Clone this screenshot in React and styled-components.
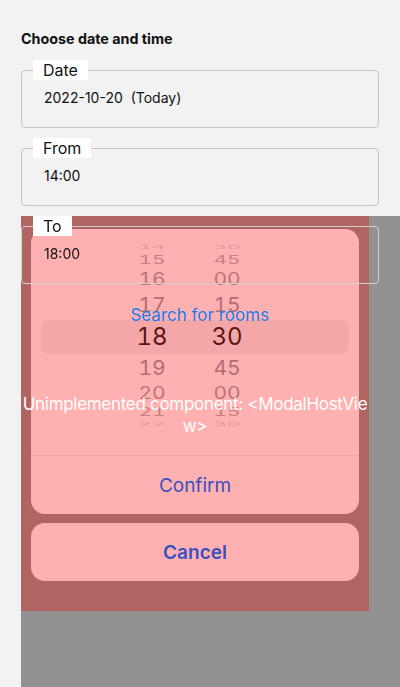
import React from "react";
import styled, { createGlobalStyle } from "styled-components";

const Global = createGlobalStyle`
  html, body { margin: 0; padding: 0; }
  body {
    background: #f2f2f2;
    font-family: "Inter", "Liberation Sans", sans-serif;
    width: 400px;
    height: 687px;
    overflow: hidden;
  }
`;

const Page = styled.div`
  padding: 30px 21px 0;
  display: flex;
  flex-direction: column;
`;

const Title = styled.h1`
  margin: 0 0 12px;
  font-size: 14.3px;
  line-height: 18px;
  font-weight: 700;
  color: #111;
`;

const FieldSet = styled.fieldset`
  margin: 0 0 10px;
  padding: 0 22px 19px;
  border: 1.5px solid #c6c6c6;
  border-radius: 4px;
  background: transparent;
  position: relative;
  z-index: ${(p) => (p.$raised ? 3 : 0)};
  border-color: ${(p) => (p.$raised ? "#d0d0d0" : "#c6c6c6")};
`;

const Legend = styled.legend`
  margin-left: -11px;
  padding: 0 10px;
  background: #ffffff;
  font-size: 16px;
  line-height: 20px;
  color: #111;
`;

const Value = styled.div`
  margin-top: 8px;
  font-size: 14px;
  line-height: 20px;
  color: #111;
  white-space: pre;
`;

const SearchButton = styled.div`
  margin-top: 10px;
  text-align: center;
  font-size: 17px;
  line-height: 22px;
  color: #1a7cf5;
  position: relative;
  z-index: 3;
`;

const Backdrop = styled.div`
  position: fixed;
  top: 216px;
  left: 21px;
  right: 0;
  bottom: 0;
  background: #929292;
  z-index: 1;
`;

const RedPanel = styled.div`
  position: relative;
  width: 348px;
  height: 395px;
  box-sizing: border-box;
  background: #b06562;
  padding: 13px 10px 30px;
  display: flex;
  flex-direction: column;
  gap: 9px;
`;

const Card = styled.div`
  background: #ffb1b1;
  border-radius: 14px;
  overflow: hidden;
  display: flex;
  flex-direction: column;
`;

const PickerArea = styled.div`
  position: relative;
  height: 227px;
  border-bottom: 1px solid #f3a2a2;
  box-sizing: border-box;
  padding-top: 12px;
  padding-left: 91px;
  display: flex;
  gap: 15px;
  overflow: hidden;
`;

const Band = styled.div`
  position: absolute;
  top: 91px;
  left: 10px;
  right: 10px;
  height: 34px;
  border-radius: 8px;
  background: #f5a7a7;
`;

const Wheel = styled.div`
  position: relative;
  width: 60px;
  display: flex;
  flex-direction: column;
`;

const Slot = styled.div`
  display: flex;
  align-items: center;
  justify-content: center;
  overflow: visible;
`;

const Digit = styled.span`
  display: inline-block;
  font-size: ${(p) => (p.$sel ? 24 : 21)}px;
  line-height: 24px;
  color: ${(p) => (p.$sel ? "#5a1717" : "#b06a6a")};
  font-variant-numeric: tabular-nums;
`;

const ActionButton = styled.div`
  height: 58px;
  display: flex;
  align-items: center;
  justify-content: center;
  font-size: 19px;
  color: #3950c1;
  font-weight: ${(p) => (p.$bold ? 600 : 400)};
`;

const ErrorText = styled.div`
  position: absolute;
  left: 0;
  right: 0;
  top: 177px;
  text-align: center;
  font-size: 17px;
  line-height: 22px;
  letter-spacing: -0.3px;
  color: #ffffff;
  word-break: break-all;
  padding: 0 1px;
`;

const slots = [
  { h: 11, s: 0.22, o: 0.35 },
  { h: 15.5, s: 0.55, o: 0.7 },
  { h: 22.5, s: 0.8, o: 0.85 },
  { h: 30, s: 0.95, o: 0.95 },
  { h: 33.5, s: 1, o: 1, sel: true },
  { h: 28.5, s: 0.95, o: 0.95 },
  { h: 22, s: 0.8, o: 0.85 },
  { h: 15, s: 0.55, o: 0.7 },
  { h: 10.5, s: 0.22, o: 0.35 },
];

const hours = ["14", "15", "16", "17", "18", "19", "20", "21", "22"];
const minutes = ["30", "45", "00", "15", "30", "45", "00", "15", "30"];

function WheelColumn({ values }) {
  return (
    <Wheel>
      {values.map((v, i) => {
        const sl = slots[i];
        return (
          <Slot key={i} style={{ height: sl.h }}>
            <Digit
              $sel={sl.sel}
              style={{ transform: `scaleY(${sl.s})`, opacity: sl.o }}
            >
              {v}
            </Digit>
          </Slot>
        );
      })}
    </Wheel>
  );
}

function Field({ label, value, raised }) {
  return (
    <FieldSet $raised={raised}>
      <Legend>{label}</Legend>
      <Value>{value}</Value>
    </FieldSet>
  );
}

export default function App() {
  return (
    <>
      <Global />
      <Page>
        <Title>Choose date and time</Title>
        <Field label="Date" value="2022-10-20  (Today)" />
        <Field label="From" value="14:00" />
        <Field label="To" value="18:00" raised />
        <SearchButton>Search for rooms</SearchButton>
      </Page>
      <Backdrop>
        <RedPanel>
          <Card>
            <PickerArea>
              <Band />
              <WheelColumn values={hours} />
              <WheelColumn values={minutes} />
            </PickerArea>
            <ActionButton>Confirm</ActionButton>
          </Card>
          <Card>
            <ActionButton $bold>Cancel</ActionButton>
          </Card>
          <ErrorText>Unimplemented component: &lt;ModalHostView&gt;</ErrorText>
        </RedPanel>
      </Backdrop>
    </>
  );
}
